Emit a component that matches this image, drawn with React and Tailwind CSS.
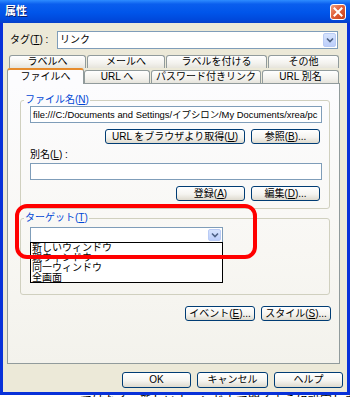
import React from "react";

const U = ({ children }) => <span className="underline">{children}</span>;

function Btn({ children, w }) {
  return (
    <div
      className={`${w} h-full flex items-center justify-center rounded-[3px] border border-[#003C74] bg-[linear-gradient(180deg,#ffffff_0%,#f5f4f0_55%,#dedace_100%)] text-black leading-none`}
    >
      {children}
    </div>
  );
}

function Arrow() {
  return (
    <svg width="8" height="6" viewBox="0 0 8 6">
      <path d="M1 1.5 L4 4.5 L7 1.5" fill="none" stroke="#4D6185" strokeWidth="1.6" />
    </svg>
  );
}

function Combo({ w, h, text }) {
  return (
    <div className={`${w} ${h} border border-[#7F9DB9] bg-white flex items-stretch`}>
      <div className="flex-1 flex items-center pl-[2px] leading-none text-black">{text}</div>
      <div className="w-[13px] m-[1px] rounded-[2px] bg-[linear-gradient(180deg,#d6e3fd_0%,#bccefa_100%)] border border-[#B9CBF5] flex items-center justify-center">
        <Arrow />
      </div>
    </div>
  );
}

function Tab({ w, children, cls = "" }) {
  return (
    <div
      className={`${w} ${cls} border border-b-0 border-[#919B9C] rounded-t-[3px] bg-[linear-gradient(180deg,#ffffff_0%,#f3f2ee_60%,#e6e4dc_100%)] flex items-center justify-center leading-none text-black`}
    >
      {children}
    </div>
  );
}

export default function App() {
  return (
    <div className="w-[350px] h-[397px] bg-white overflow-hidden relative text-[10px] font-['Liberation_Sans','Noto_Sans_CJK_JP',sans-serif]">
      {/* title bar */}
      <div className="h-[23px] flex items-center justify-between pl-[5px] pr-[4px] bg-[linear-gradient(180deg,#2e8cff_0%,#0a5eee_18%,#0055ea_55%,#0049dc_85%,#0840c8_100%)]">
        <span className="text-white font-bold text-[11px] leading-none [text-shadow:1px_1px_0_#0a1e6e]">属性</span>
        <div className="w-[16px] h-[16px] rounded-[3px] border border-white bg-[linear-gradient(135deg,#f0a080_0%,#e2603a_45%,#c63f17_100%)] flex items-center justify-center">
          <svg width="10" height="10" viewBox="0 0 10 10">
            <path d="M1.5 1.5 L8.5 8.5 M8.5 1.5 L1.5 8.5" stroke="white" strokeWidth="2" strokeLinecap="square" />
          </svg>
        </div>
      </div>

      {/* body */}
      <div className="h-[372px] bg-[#ECE9D8] border-x-[3px] border-b-[3px] border-[#0831D9] flex flex-col">
        {/* tag row */}
        <div className="mt-[8px] h-[18px] flex items-center">
          <div className="ml-[7px] w-[47px] leading-none text-black">
            タグ(<U>T</U>) :
          </div>
          <Combo w="w-[281px]" h="h-[18px]" text="リンク" />
        </div>

        {/* tab row 1 */}
        <div className="mt-[6px] h-[13px] flex pl-[6px]">
          <Tab w="w-[77px]">ラベルへ</Tab>
          <Tab w="w-[78px]" cls="ml-[1px]">メールへ</Tab>
          <Tab w="w-[101px]" cls="ml-[1px]">ラベルを付ける</Tab>
          <Tab w="w-[71px]" cls="ml-[1px]">その他</Tab>
        </div>
        {/* tab row 2 */}
        <div className="h-[15px] flex items-start pl-[4px]">
          <div className="relative z-10 w-[77px] h-[16px] border-x border-[#919B9C] border-t-[2px] border-t-[#E68B2C] rounded-t-[3px] bg-[#FCFCFE] flex items-center justify-center leading-none text-black">
            ファイルへ
          </div>
          <Tab w="w-[66px]" cls="mt-[2px] h-[13px]">URL へ</Tab>
          <Tab w="w-[110px]" cls="ml-[1px] mt-[2px] h-[13px]">パスワード付きリンク</Tab>
          <Tab w="w-[77px]" cls="ml-[1px] mt-[2px] h-[13px]">URL 別名</Tab>
        </div>

        {/* panel */}
        <div className="ml-[4px] w-[333px] h-[281px] border border-[#919B9C] bg-[linear-gradient(180deg,#fcfcfe_0%,#f8f7f3_60%,#f3f2ec_100%)] flex flex-col">
          <fieldset className="mt-[10px] ml-[12px] w-[310px] h-[115px] border border-[#D0D0BF] rounded-[3px] flex flex-col">
            <legend className="ml-[3px] px-[1px] leading-[12px] text-[#0046D5]">
              ファイル名(<U>N</U>)
            </legend>
            <div className="ml-[9px] w-[292px] h-[17px] border border-[#7F9DB9] bg-white flex items-center pl-[2px] overflow-hidden whitespace-nowrap leading-none text-black text-[9.4px]">
              file:///C:/Documents and Settings/イプシロン/My Documents/xrea/pc
            </div>
            <div className="mt-[6px] h-[15px] flex justify-end gap-[6px] pr-[9px]">
              <Btn w="w-[140px]">
                URL をブラウザより取得(<U>U</U>)
              </Btn>
              <Btn w="w-[69px]">
                参照(<U>B</U>)...
              </Btn>
            </div>
            <div className="mt-[5px] ml-[9px] h-[12px] leading-[12px] text-black">
              別名(<U>L</U>) :
            </div>
            <div className="mt-[2px] ml-[9px] w-[292px] h-[17px] border border-[#7F9DB9] bg-white" />
            <div className="mt-[6px] h-[15px] flex justify-end gap-[6px] pr-[9px]">
              <Btn w="w-[69px]">
                登録(<U>A</U>)
              </Btn>
              <Btn w="w-[69px]">
                編集(<U>D</U>)...
              </Btn>
            </div>
          </fieldset>

          <fieldset className="mt-[3px] ml-[12px] w-[310px] h-[83px] border border-[#D0D0BF] rounded-[3px] flex flex-col">
            <legend className="ml-[3px] px-[1px] leading-[12px] text-[#0046D5]">
              ターゲット(<U>T</U>)
            </legend>
            <div className="mt-[3px] ml-[9px]">
              <Combo w="w-[193px]" h="h-[16px]" text="" />
            </div>
          </fieldset>

          <div className="mt-[11px] h-[15px] flex justify-end gap-[6px] pr-[8px]">
            <Btn w="w-[70px]">
              イベント(<U>E</U>)...
            </Btn>
            <Btn w="w-[70px]">
              スタイル(<U>S</U>)...
            </Btn>
          </div>
        </div>

        {/* bottom buttons */}
        <div className="mt-[8px] h-[16px] flex justify-end gap-[6px] pr-[4px]">
          <Btn w="w-[69px]">OK</Btn>
          <Btn w="w-[71px]">キャンセル</Btn>
          <Btn w="w-[69px]">ヘルプ</Btn>
        </div>
      </div>

      {/* strip of page underneath */}
      <div className="h-[2px] overflow-hidden pl-[80px] text-[12px] leading-[12px] text-black whitespace-nowrap">
        ではなく、新しいウィンドウで開くように設定します。
      </div>

      {/* open dropdown list */}
      <div className="absolute left-[30px] top-[242px] w-[193px] h-[41px] border border-black bg-white flex flex-col text-black">
        <div className="h-[10px] leading-[10px] pl-[1px]">新しいウィンドウ</div>
        <div className="h-[10px] leading-[10px] pl-[1px]">親ウィンドウ</div>
        <div className="h-[10px] leading-[10px] pl-[1px]">同一ウィンドウ</div>
        <div className="h-[9px] leading-[10px] pl-[1px]">全画面</div>
      </div>

      {/* red annotation */}
      <div className="absolute left-[15px] top-[204px] w-[242px] h-[55px] border-[4px] border-[#FF0000] rounded-[12px]" />
    </div>
  );
}
